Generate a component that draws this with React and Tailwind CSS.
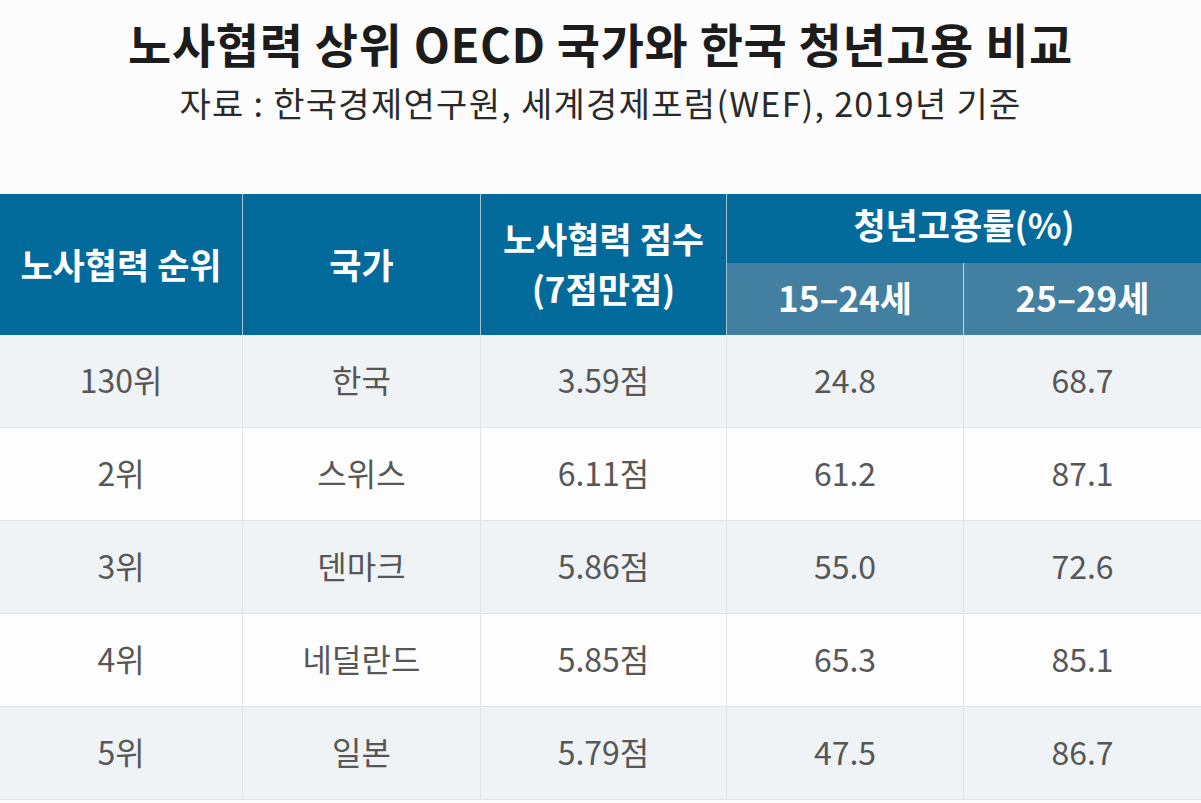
import React from "react";

const rows = [
  { rank: "130위", country: "한국", score: "3.59점", a: "24.8", b: "68.7" },
  { rank: "2위", country: "스위스", score: "6.11점", a: "61.2", b: "87.1" },
  { rank: "3위", country: "덴마크", score: "5.86점", a: "55.0", b: "72.6" },
  { rank: "4위", country: "네덜란드", score: "5.85점", a: "65.3", b: "85.1" },
  { rank: "5위", country: "일본", score: "5.79점", a: "47.5", b: "86.7" },
];

const font = { fontFamily: '"Noto Sans CJK KR", "Noto Sans", sans-serif' };

const App = () => {
  return (
    <div className="w-[1201px] h-[803px] bg-[#fcfcfc] overflow-hidden" style={font}>
      <div className="flex flex-col items-center pt-[12px] h-[194px]">
        <h1 className="text-[47px] leading-[62px] font-bold text-[#1c1c1c] tracking-[0.6px]">
          노사협력 상위 OECD 국가와 한국 청년고용 비교
        </h1>
        <p className="text-[34px] leading-[48px] mt-[5px] text-[#2a2a2a] tracking-[1.3px]">
          자료 : 한국경제연구원, 세계경제포럼(WEF), 2019년 기준
        </p>
      </div>

      {/* header */}
      <div className="grid grid-cols-[243px_238px_246px_237px_237px] grid-rows-[69px_72px] text-white font-bold text-[35px]">
        <div className="row-span-2 flex items-center justify-center bg-[#036a9c] border-r border-[#a9c3d3]">
          노사협력 순위
        </div>
        <div className="row-span-2 flex items-center justify-center bg-[#036a9c] border-r border-[#a9c3d3]">
          국가
        </div>
        <div className="row-span-2 flex flex-col items-center justify-center bg-[#036a9c] border-r border-[#a9c3d3] leading-[50px] pb-[4px]">
          <span>노사협력 점수</span>
          <span>(7점만점)</span>
        </div>
        <div className="col-span-2 flex items-center justify-center bg-[#036a9c] pb-[8px]">
          청년고용률(%)
        </div>
        <div className="flex items-center justify-center bg-[#427fa0] border-r border-[#c5d6e0] pb-[4px]">
          15–24세
        </div>
        <div className="flex items-center justify-center bg-[#427fa0] pb-[4px]">
          25–29세
        </div>
      </div>

      {/* body */}
      <div className="flex flex-col">
        {rows.map((r, i) => (
          <div
            key={i}
            className={`grid grid-cols-[243px_238px_246px_237px_237px] h-[93px] border-b border-[#e1e5e8] text-[32px] text-[#575757] ${
              i % 2 === 0 ? "bg-[#eff3f5]" : "bg-[#fdfdfd]"
            }`}
          >
            <div className="flex items-center justify-center border-r border-[#dfe3e6] pb-[4px]">{r.rank}</div>
            <div className="flex items-center justify-center border-r border-[#dfe3e6] pb-[4px]">{r.country}</div>
            <div className="flex items-center justify-center border-r border-[#dfe3e6] pb-[4px]">{r.score}</div>
            <div className="flex items-center justify-center border-r border-[#dfe3e6] pb-[4px]">{r.a}</div>
            <div className="flex items-center justify-center pb-[4px]">{r.b}</div>
          </div>
        ))}
      </div>
    </div>
  );
};

export default App;
